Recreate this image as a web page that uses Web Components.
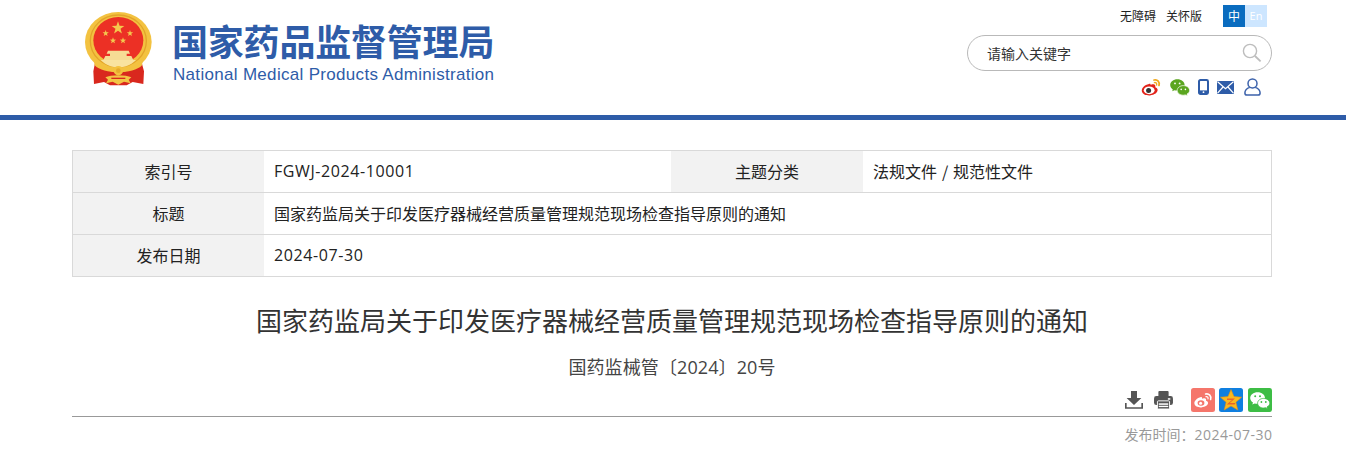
<!DOCTYPE html>
<html lang="zh-CN">
<head>
<meta charset="utf-8">
<title>国家药监局关于印发医疗器械经营质量管理规范现场检查指导原则的通知</title>
<style>
  html, body { margin: 0; padding: 0; background: #fff; overflow: hidden; }
  body { font-family: "Open Sans", "Noto Sans CJK SC", sans-serif; color: #333; }
</style>
</head>
<body>
<nmpa-header></nmpa-header>
<meta-table>
  <meta-row label="索引号" value="FGWJ-2024-10001" label2="主题分类" value2="法规文件 / 规范性文件"></meta-row>
  <meta-row label="标题" value="国家药监局关于印发医疗器械经营质量管理规范现场检查指导原则的通知"></meta-row>
  <meta-row label="发布日期" value="2024-07-30"></meta-row>
</meta-table>
<article-head>
  <span slot="title">国家药监局关于印发医疗器械经营质量管理规范现场检查指导原则的通知</span>
  <span slot="sub">国药监械管〔2024〕20号</span>
  <span slot="date-label">发布时间：</span>
  <span slot="date-value">2024-07-30</span>
</article-head>

<script>
class NmpaEmblem extends HTMLElement {
  constructor() {
    super();
    this._root = this.attachShadow({ mode: "open" });
  }
  connectedCallback() {
    const star = (cx, cy, r) => {
      let pts = [];
      for (let i = 0; i < 10; i++) {
        const a = -Math.PI / 2 + (i * Math.PI) / 5;
        const d = i % 2 ? r * 0.4 : r;
        pts.push((cx + d * Math.cos(a)).toFixed(1) + "," + (cy + d * Math.sin(a)).toFixed(1));
      }
      return `<polygon points="${pts.join(" ")}" fill="#f4c84e"/>`;
    };
    this._root.innerHTML = /*html*/ `
      <style>
        :host { display: block; width: 76px; height: 80px; }
        svg { display: block; }
      </style>
      <svg width="76" height="80" viewBox="0 0 228 240">
        <path d="M46 160 L40 190 L42 228 L72 222 L90 232 H140 L158 222 L190 228 L192 190 L184 160 Z" fill="#d9281e"/>
        <ellipse cx="115" cy="102" rx="100" ry="90" fill="#f3c240"/>
        <ellipse cx="115" cy="99" rx="84" ry="78" fill="none" stroke="#e2a42a" stroke-width="4"/>
        <ellipse cx="115" cy="97" rx="75" ry="70" fill="#ec3025"/>
        ${star(114, 60, 20)}${star(77, 76, 10)}${star(150, 76, 10)}${star(99, 98, 10)}${star(129, 98, 10)}
        <path d="M84 128 H146 L150 137 H140 V144 H154 L160 156 H70 L76 144 H90 V137 H80 Z" fill="#f6dc94"/>
        <path d="M40 146 C60 178 90 186 115 186 C140 186 170 178 190 146 L186 172 C160 200 70 200 44 172 Z" fill="#f3c240"/>
        <path d="M62 156 H168 C152 172 132 178 115 178 C98 178 78 172 62 156 Z" fill="#f9e3a0"/>
        <circle cx="115" cy="188" r="14" fill="#f3c240"/>
        <circle cx="115" cy="188" r="7" fill="#e8a92c"/>
        <path d="M76 208 C92 200 138 200 154 208 L146 215 L152 226 L132 221 L115 230 L98 221 L78 226 L84 215 Z" fill="#f3c545"/>
        <path d="M94 209 H136 V213 H94 Z" fill="#d9281e"/>
      </svg>`;
  }
}

class NmpaLogo extends HTMLElement {
  constructor() {
    super();
    this._root = this.attachShadow({ mode: "open" });
  }
  connectedCallback() {
    this._root.innerHTML = /*html*/ `
      <style>
        :host { display: flex; align-items: flex-start; }
        .words { margin: 11px 0 0 16px; color: #2e5ca8; white-space: nowrap; }
        .cn { font: 700 36px/42px "Noto Sans CJK SC", sans-serif; letter-spacing: -0.2px; height: 42px; }
        .en { font: 400 17px/22px "Liberation Sans", sans-serif; letter-spacing: .31px; margin: 3px 0 0 1px; }
      </style>
      <nmpa-emblem></nmpa-emblem>
      <div class="words">
        <div class="cn">国家药品监督管理局</div>
        <div class="en">National Medical Products Administration</div>
      </div>`;
  }
}

class NmpaSearch extends HTMLElement {
  constructor() {
    super();
    this._root = this.attachShadow({ mode: "open" });
  }
  connectedCallback() {
    this._root.innerHTML = /*html*/ `
      <style>
        :host { display: flex; align-items: center; justify-content: space-between; box-sizing: border-box;
          width: 305px; height: 36px; padding: 0 9px 0 19px; border: 1px solid #b9b9b9; border-radius: 18px; }
        span { font: 400 14px/34px "Noto Sans CJK SC", sans-serif; color: #333; }
        svg { display: block; }
      </style>
      <span>请输入关键字</span>
      <svg width="20" height="20" viewBox="0 0 20 20" fill="none" stroke="#bdbdbd">
        <circle cx="8" cy="8" r="6.6" stroke-width="1.4"/>
        <path d="M13 13 L18.6 18.4" stroke-width="1.8"/>
      </svg>`;
  }
}

class NmpaHeader extends HTMLElement {
  constructor() {
    super();
    this._root = this.attachShadow({ mode: "open" });
  }
  connectedCallback() {
    this._root.innerHTML = /*html*/ `
      <style>
        :host { display: block; border-bottom: 5px solid #2e5ca8; height: 115px; }
        .inner { display: flex; justify-content: space-between; height: 115px; margin: 0 74px 0 80px; }
        nmpa-logo { margin-top: 8px; }
        .right { display: flex; flex-direction: column; align-items: flex-end; padding-top: 5px; }
        .top { display: flex; align-items: center; height: 22px; margin-right: 5px; font: 400 12px/22px "Noto Sans CJK SC", sans-serif; color: #222; }
        .top a { margin-right: 10px; }
        .lang { display: flex; margin-left: 21px; }
        .lang b { width: 22px; height: 22px; text-align: center; font-weight: 400; color: #fff; background: #0a6cbf; }
        .lang b + b { background: #cde6ff; font-family: "Open Sans", sans-serif; font-size: 11px; }
        nmpa-search { margin-top: 8px; }
        .icons { display: flex; align-items: center; height: 18px; margin: 7px 11px 0 0; }
        .icons svg { display: block; }
      </style>
      <div class="inner">
        <nmpa-logo></nmpa-logo>
        <div class="right">
          <div class="top">
            <a>无障碍</a><a style="margin-right:0">关怀版</a>
            <div class="lang"><b>中</b><b>En</b></div>
          </div>
          <nmpa-search></nmpa-search>
          <div class="icons">
            <svg width="21" height="18" viewBox="0 0 21 18" style="margin-right:8px">
              <path d="M8 6 C3.5 7 .5 10 .8 13 C1.2 16.5 5.5 17.6 9 17.4 C13.5 17 17 14.6 16.6 11.6 C16.4 10 15 9.6 14.2 9.2 C14.8 7.6 14.2 6 12 6.2 C11 6.3 10 6.7 9.6 7 C9.8 5.8 9 5.6 8 6 Z" fill="#e2231a"/>
              <ellipse cx="8.2" cy="12.3" rx="5.4" ry="3.9" fill="#fff"/>
              <circle cx="7.6" cy="12.6" r="2.5" fill="#333"/>
              <path d="M13 2 C16.5 1 19 4 18 7.4" fill="none" stroke="#f0a91e" stroke-width="1.8" stroke-linecap="round"/>
              <path d="M13.4 4.6 C15 4.3 16 5.4 15.6 7" fill="none" stroke="#f0a91e" stroke-width="1.4" stroke-linecap="round"/>
            </svg>
            <svg width="20" height="17" viewBox="0 0 20 17" style="margin-right:8px">
              <path d="M7.4 .3 C3.4 .3 .2 2.9 .2 6 C.2 7.8 1.2 9.3 2.8 10.4 L2.2 12.3 L4.5 11.2 C5.3 11.5 6.2 11.6 7 11.6 C10.5 11.8 14.6 9.5 14.6 6 C14.6 2.9 11.4 .3 7.4 .3 Z" fill="#5ba620"/>
              <path d="M13.4 6.6 C9.9 6.6 7.2 8.8 7.2 11.4 C7.2 14.1 9.9 16.2 13.4 16.2 C14.1 16.2 14.8 16.1 15.4 15.9 L17.6 17 L17 15.1 C18.6 14.2 19.6 12.9 19.6 11.4 C19.6 8.8 16.9 6.6 13.4 6.6 Z" fill="#5ba620" stroke="#fff" stroke-width=".7"/>
              <circle cx="5" cy="4.4" r=".9" fill="#fff"/><circle cx="9.6" cy="4.4" r=".9" fill="#fff"/>
              <circle cx="11.2" cy="10.4" r=".8" fill="#fff"/><circle cx="15.4" cy="10.4" r=".8" fill="#fff"/>
            </svg>
            <svg width="11" height="16" viewBox="0 0 11 16" style="margin-right:8px">
              <rect x="1" y="1" width="9" height="14" rx="1.4" fill="none" stroke="#2e5ca8" stroke-width="2"/>
              <rect x="1" y="11.4" width="9" height="3.6" fill="#2e5ca8"/>
              <circle cx="5.5" cy="13.2" r=".9" fill="#fff"/>
            </svg>
            <svg width="17" height="13" viewBox="0 0 17 13" style="margin-right:10px">
              <rect x="0" y="0" width="17" height="13" rx="1" fill="#2e5ca8"/>
              <path d="M.6 .8 L8.5 7.6 L16.4 .8 M.6 12.2 L6 6 M16.4 12.2 L11 6" fill="none" stroke="#fff" stroke-width="1.2"/>
            </svg>
            <svg width="17" height="18" viewBox="0 0 17 18" fill="none" stroke="#3c62ab" stroke-width="1.5">
              <circle cx="8.5" cy="5.4" r="4.5"/>
              <path d="M5.8 9.4 C2.8 10.4 .9 12.6 .9 15 C.9 16.4 1.6 17.1 3 17.1 H14 C15.4 17.1 16.1 16.4 16.1 15 C16.1 12.6 14.2 10.4 11.2 9.4"/>
            </svg>
          </div>
        </div>
      </div>`;
  }
}

class MetaTable extends HTMLElement {
  constructor() {
    super();
    this._root = this.attachShadow({ mode: "open" });
    this._root.innerHTML = /*html*/ `
      <style>
        :host { display: block; box-sizing: border-box; width: 1200px; margin: 30px 0 0 72px; border: 1px solid #d9d9d9; border-bottom: 0; }
      </style>
      <slot></slot>`;
  }
}

class MetaRow extends HTMLElement {
  constructor() {
    super();
    this._root = this.attachShadow({ mode: "open" });
  }
  connectedCallback() {
    const label2 = this.getAttribute("label2");
    const value = this.getAttribute("value");
    const isLatin = /^[\w-]+$/.test(value);
    this._root.innerHTML = /*html*/ `
      <style>
        :host { display: flex; box-sizing: border-box; height: 42px; border-bottom: 1px solid #d9d9d9;
          font: 400 16px/41px "Noto Sans CJK SC", sans-serif; color: #222; }
        .k { flex: none; width: 191px; text-align: center; background: #f2f2f2; }
        .v { padding-left: 10px; white-space: nowrap; }
        .v.first { width: 397px; }
        .v.first + .k { width: 192px; }
        .v.latin { font-family: "Open Sans", sans-serif; letter-spacing: .6px; }
        .v.spaced { word-spacing: 1.3px; }
      </style>
      <div class="k">${this.getAttribute("label")}</div>
      <div class="v ${label2 ? "first" : ""} ${isLatin ? "latin" : ""}">${value}</div>
      ${label2 ? `<div class="k">${label2}</div><div class="v spaced">${this.getAttribute("value2")}</div>` : ""}`;
  }
}

class ShareBar extends HTMLElement {
  constructor() {
    super();
    this._root = this.attachShadow({ mode: "open" });
  }
  connectedCallback() {
    this._root.innerHTML = /*html*/ `
      <style>
        :host { display: flex; align-items: center; justify-content: flex-end; height: 24px; }
        svg { display: block; }
      </style>
      <svg width="18" height="18" viewBox="0 0 18 18" style="margin-right:11px">
        <path d="M6 0 H12 V7 H16.4 L9 14 L1.6 7 H6 Z" fill="#555"/>
        <path d="M.8 12 V17 H17.2 V12" fill="none" stroke="#555" stroke-width="1.7"/>
      </svg>
      <svg width="19" height="18" viewBox="0 0 20 19" style="margin-right:18px">
        <path d="M4.6 6 V1 C4.6 .4 5 0 5.6 0 H14.4 C15 0 15.4 .4 15.4 1 V6 Z" fill="#555"/>
        <rect x="0" y="5.4" width="20" height="9.4" rx="2.4" fill="#555"/>
        <rect x="3.6" y="10.4" width="12.8" height="8.6" rx="1" fill="#555" stroke="#fff" stroke-width="1"/>
        <rect x="5" y="13" width="10" height="1.6" fill="#fff"/><rect x="5" y="15.6" width="10" height="1.4" fill="#fff"/>
        <rect x="14.6" y="7.6" width="2.6" height="1.6" fill="#fff"/>
      </svg>
      <svg width="24" height="24" viewBox="0 0 24 24" style="margin-right:4px">
        <rect width="24" height="24" rx="2.5" fill="#f5766b"/>
        <path d="M10 9 C6 10 3 13 3.4 15.6 C3.8 18.6 7.4 19.6 10.4 19.4 C14.4 19 17.4 17 17 14.6 C16.8 13.4 15.8 13 15 12.7 C15.5 11.3 14.8 10 13 10.2 C12 10.3 11.4 10.6 11 10.8 C11.2 9.6 11 8.6 10 9 Z" fill="#fff"/>
        <ellipse cx="10" cy="15" rx="3.4" ry="2.8" fill="#f5766b"/>
        <circle cx="9.6" cy="15.2" r="1.5" fill="#fff"/>
        <path d="M14.6 6 C18 5.2 20.6 8 19.6 11.4" fill="none" stroke="#fff" stroke-width="1.6" stroke-linecap="round"/>
        <path d="M15 8.6 C16.4 8.4 17.4 9.4 17 10.8" fill="none" stroke="#fff" stroke-width="1.2" stroke-linecap="round"/>
      </svg>
      <svg width="24" height="24" viewBox="0 0 24 24" style="margin-right:5px">
        <rect width="24" height="24" rx="2.5" fill="#0f7fe0"/>
        <path d="M12 1.6 L15 8.6 L22.6 9.2 L16.9 14.2 L18.8 22 L12 18 L5.2 22 L7.1 14.2 L1.4 9.2 L9 8.6 Z" fill="#f9b91f" stroke="#e88f12" stroke-width=".6"/>
        <path d="M8 10.4 H16 L10.8 15 H16.4 L15.6 16.6 H7.6 L13 12 H8 Z" fill="#e9642a"/>
      </svg>
      <svg width="24" height="24" viewBox="0 0 24 24">
        <rect width="24" height="24" rx="2.5" fill="#3dbd45"/>
        <path d="M9.6 4.2 C5.4 4.2 2.2 6.8 2.2 10 C2.2 11.9 3.3 13.4 5 14.6 L4.3 16.6 L6.7 15.4 C7.6 15.7 8.6 15.8 9.6 15.8 C13.8 15.8 17 13.2 17 10 C17 6.8 13.8 4.2 9.6 4.2 Z" fill="#fff"/>
        <path d="M15.6 10.4 C12.2 10.4 9.6 12.6 9.6 15.2 C9.6 17.8 12.2 20 15.6 20 C16.3 20 17 19.9 17.6 19.7 L19.6 20.8 L19 19 C20.7 18 21.8 16.7 21.8 15.2 C21.8 12.6 19 10.4 15.6 10.4 Z" fill="#fff" stroke="#3dbd45" stroke-width=".8"/>
        <circle cx="7.2" cy="8.2" r="1" fill="#3dbd45"/><circle cx="12" cy="8.2" r="1" fill="#3dbd45"/>
        <circle cx="13.4" cy="14" r=".9" fill="#3dbd45"/><circle cx="17.8" cy="14" r=".9" fill="#3dbd45"/>
      </svg>`;
  }
}

class ArticleHead extends HTMLElement {
  constructor() {
    super();
    this._root = this.attachShadow({ mode: "open" });
    this._root.innerHTML = /*html*/ `
      <style>
        :host { display: block; width: 1200px; margin-left: 72px; font-family: "Noto Sans CJK SC", sans-serif; color: #333; }
        .title { margin-top: 23px; height: 40px; font-size: 26px; line-height: 40px; text-align: center; }
        .sub { margin-top: 13px; height: 28px; font-size: 18px; line-height: 28px; text-align: center; font-family: "Open Sans", "Noto Sans CJK SC", sans-serif; letter-spacing: .1px; color: #444; }
        share-bar { margin-top: 7px; }
        .date { margin-top: 4px; padding-top: 6px; border-top: 1px solid #999; height: 24px; text-align: right; font: 400 14px/22px "Noto Sans CJK SC", sans-serif; color: #999; }
        .date .num { font-family: "Open Sans", sans-serif; letter-spacing: .5px; margin-right: -.5px; }
      </style>
      <div class="title"><slot name="title"></slot></div>
      <div class="sub"><slot name="sub"></slot></div>
      <share-bar></share-bar>
      <div class="date"><slot name="date-label"></slot><span class="num"><slot name="date-value"></slot></span></div>`;
  }
}

window.customElements.define("nmpa-emblem", NmpaEmblem);
window.customElements.define("nmpa-logo", NmpaLogo);
window.customElements.define("nmpa-search", NmpaSearch);
window.customElements.define("nmpa-header", NmpaHeader);
window.customElements.define("meta-table", MetaTable);
window.customElements.define("meta-row", MetaRow);
window.customElements.define("share-bar", ShareBar);
window.customElements.define("article-head", ArticleHead);
</script>
</body>
</html>
